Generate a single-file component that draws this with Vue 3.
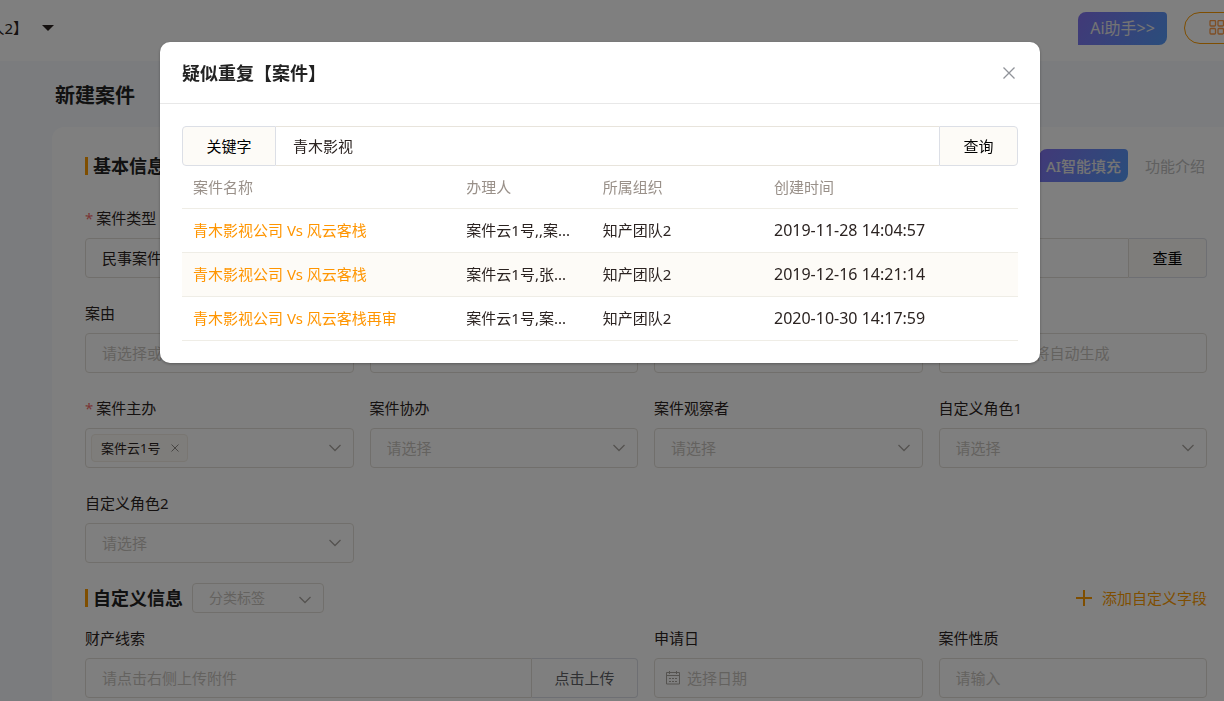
<template>
  <div class="page">
    <header class="topbar">
      <div class="account">人2】</div>
      <button class="caret" type="button" aria-label="切换账号">
        <svg width="12" height="6" viewBox="0 0 12 6"><path d="M0 0h12L6 6z" fill="currentColor" /></svg>
      </button>
      <button class="ai-btn top-ai" type="button">Ai助手&gt;&gt;</button>
      <button class="apps" type="button" aria-label="应用">
        <svg width="16" height="16" viewBox="0 0 16 16" fill="none" stroke="currentColor" stroke-width="1.3">
          <rect x="1" y="0.500" width="5.500" height="5.500" rx="1" />
          <rect x="9" y="0.500" width="5.500" height="5.500" rx="1" />
          <rect x="1" y="8.500" width="5.500" height="5.500" rx="1" />
          <rect x="9" y="8.500" width="5.500" height="5.500" rx="1" />
        </svg>
      </button>
    </header>

    <main>
      <h1>新建案件</h1>
      <div class="card">
        <div class="section-head first">
          <h2>基本信息</h2>
          <button class="ai-btn fill" type="button">AI智能填充</button>
          <a class="intro" href="#">功能介绍</a>
        </div>

        <div class="form">
          <div class="field">
            <label for="type"><i>*</i>案件类型</label>
            <div class="select">
              <select id="type" class="filled">
                <option>民事案件</option>
              </select>
              <svg class="arrow" viewBox="0 0 12 8"><path d="M0.5 1L6 6.500 11.500 1" /></svg>
            </div>
          </div>
          <div class="field span3 no-label">
            <div class="group">
              <input type="text" aria-label="案件名称" />
              <button class="append" type="button">查重</button>
            </div>
          </div>

          <div class="field">
            <label for="cause">案由</label>
            <input id="cause" type="text" placeholder="请选择或输入" />
          </div>
          <div class="field no-label"><input type="text" aria-label="案件标的" /></div>
          <div class="field no-label"><input type="text" aria-label="案件阶段" /></div>
          <div class="field no-label">
            <input type="text" aria-label="案件编号" placeholder="保存后 系统将自动生成" />
          </div>

          <div class="field">
            <label for="owner"><i>*</i>案件主办</label>
            <div class="select tags">
              <span class="tag">
                案件云1号
                <button id="owner" type="button" aria-label="移除">
                  <svg width="8" height="8" viewBox="0 0 8 8"><path d="M0.5 0.5l7 7M7.5 0.5l-7 7" /></svg>
                </button>
              </span>
              <svg class="arrow" viewBox="0 0 12 8"><path d="M0.5 1L6 6.500 11.500 1" /></svg>
            </div>
          </div>
          <div v-for="item in roles" :key="item.id" class="field">
            <label :for="item.id">{{ item.label }}</label>
            <div class="select">
              <select :id="item.id">
                <option>请选择</option>
              </select>
              <svg class="arrow" viewBox="0 0 12 8"><path d="M0.5 1L6 6.500 11.500 1" /></svg>
            </div>
          </div>
        </div>

        <div class="section-head">
          <h2>自定义信息</h2>
          <div class="select small">
            <select aria-label="分类标签">
              <option>分类标签</option>
            </select>
            <svg class="arrow" viewBox="0 0 12 8"><path d="M0.5 1L6 6.500 11.500 1" /></svg>
          </div>
          <button class="add" type="button">
            <svg width="16" height="16" viewBox="0 0 16 16"><path d="M8 0v16M0 8h16" /></svg>
            添加自定义字段
          </button>
        </div>

        <div class="form">
          <div class="field span2">
            <label for="clue">财产线索</label>
            <div class="group">
              <input id="clue" type="text" placeholder="请点击右侧上传附件" />
              <button class="append upload" type="button">点击上传</button>
            </div>
          </div>
          <div class="field">
            <label for="date">申请日</label>
            <div class="date">
              <svg width="14" height="14" viewBox="0 0 14 14">
                <path d="M0.5 1.5h13v11.500h-13zM0.500 4.500h13M3.500 0v3M10.500 0v3M3 7.500h2M6 7.500h2M9 7.500h2M3 10.500h2M6 10.500h2M9 10.500h2" />
              </svg>
              <input id="date" type="text" placeholder="选择日期" />
            </div>
          </div>
          <div class="field">
            <label for="nature">案件性质</label>
            <input id="nature" type="text" placeholder="请输入" />
          </div>
        </div>
      </div>
    </main>

    <div class="mask">
      <section class="dialog" role="dialog" aria-labelledby="dialog-title">
        <div class="dialog-head">
          <h2 id="dialog-title">疑似重复【案件】</h2>
          <button type="button" aria-label="关闭">
            <svg width="12" height="12" viewBox="0 0 12 12"><path d="M0.5 0.5l11 11M11.5 0.5l-11 11" /></svg>
          </button>
        </div>
        <div class="dialog-body">
          <div class="search">
            <label for="keyword">关键字</label>
            <input id="keyword" v-model="keyword" type="text" />
            <button type="button">查询</button>
          </div>
          <table>
            <thead>
              <tr>
                <th class="col-name">案件名称</th>
                <th class="col-person">办理人</th>
                <th class="col-org">所属组织</th>
                <th>创建时间</th>
              </tr>
            </thead>
            <tbody>
              <tr v-for="row in rows" :key="row.time">
                <td><a href="#">{{ row.name }}</a></td>
                <td>{{ row.person }}</td>
                <td>{{ row.org }}</td>
                <td class="time">{{ row.time }}</td>
              </tr>
            </tbody>
          </table>
        </div>
      </section>
    </div>
  </div>
</template>

<script setup>
import { ref } from 'vue';

const keyword = ref('青木影视');

const roles = [
  { id: 'assist', label: '案件协办' },
  { id: 'watcher', label: '案件观察者' },
  { id: 'role1', label: '自定义角色1' },
  { id: 'role2', label: '自定义角色2' },
];

const rows = [
  { name: '青木影视公司 Vs 风云客栈', person: '案件云1号,,案...', org: '知产团队2', time: '2019-11-28 14:04:57' },
  { name: '青木影视公司 Vs 风云客栈', person: '案件云1号,张...', org: '知产团队2', time: '2019-12-16 14:21:14' },
  { name: '青木影视公司 Vs 风云客栈再审', person: '案件云1号,案...', org: '知产团队2', time: '2020-10-30 14:17:59' },
];
</script>

<style>
body {
  margin: 0;
  overflow: hidden;
}
</style>

<style scoped>
* {
  box-sizing: border-box;
}

.page {
  height: 100vh;
  overflow: hidden;
  background: #f6f8fd;
  color: #2b2321;
  font-family: 'Noto Sans', 'Noto Sans CJK SC', sans-serif;
  font-size: 15px;
  line-height: 20px;
}

h1,
h2 {
  margin: 0;
  color: #222;
  font-weight: bold;
}

button,
input,
select {
  margin: 0;
  padding: 0;
  border: 0;
  background: none;
  color: inherit;
  font: inherit;
}

a {
  text-decoration: none;
}

svg {
  display: block;
  flex: none;
}

.topbar {
  display: flex;
  align-items: center;
  height: 61px;
  padding-bottom: 5px;
  background: #fff;
}

.account {
  display: flex;
  justify-content: flex-end;
  width: 28px;
  overflow: hidden;
  white-space: nowrap;
}

.caret {
  margin-left: 14px;
}

.ai-btn {
  flex: none;
  width: 89px;
  height: 33px;
  border-radius: 8px 4px 8px 0;
  background: linear-gradient(120deg, #8373f0, #559bf8);
  color: #e8e8e8;
  white-space: nowrap;
}

.top-ai {
  margin-left: auto;
  font-size: 16px;
}

.apps {
  flex: none;
  width: 100px;
  height: 32px;
  margin-left: 17px;
  margin-right: -60px;
  padding-left: 24px;
  border: 1px solid #ff9c00;
  border-radius: 16px;
  color: #ff9c48;
}

h1 {
  padding: 21px 0 17px 55px;
  font-size: 20px;
  line-height: 28px;
}

.card {
  margin-left: 52px;
  padding: 19px 17px 40px 33px;
  border-radius: 12px 0 0 0;
  background: #fff;
}

.section-head {
  display: flex;
  align-items: center;
  height: 40px;
}

.section-head.first {
  height: 39px;
  margin-bottom: 13px;
}

.section-head h2 {
  padding-left: 5px;
  border-left: 3px solid #ff9c00;
  font-size: 18px;
  line-height: 18px;
}

.fill {
  margin-left: auto;
  font-weight: 500;
}

.intro {
  width: 62px;
  margin-left: 17px;
  color: #c0c0c0;
}

.form {
  display: grid;
  grid-template-columns: repeat(4, 1fr);
  gap: 15px 16px;
  margin-bottom: 15px;
}

.field {
  min-width: 0;
}

.span2 {
  grid-column: span 2;
}

.span3 {
  grid-column: span 3;
}

.field.no-label {
  padding-top: 40px;
}

label {
  display: block;
  line-height: 40px;
}

label i {
  margin-right: 3px;
  color: #f56c6c;
  font-style: normal;
}

.field input,
.select select {
  display: block;
  width: 100%;
  height: 40px;
  padding: 0 16px;
  border: 1px solid #e3dfd8;
  border-radius: 4px;
}

input::placeholder {
  color: #c9c5bf;
  opacity: 1;
}

.select {
  position: relative;
}

.select select {
  appearance: none;
  color: #c9c5bf;
}

.select select.filled {
  color: inherit;
}

.arrow {
  position: absolute;
  top: 16px;
  right: 13px;
  width: 12px;
  height: 8px;
  fill: none;
  stroke: #aaa6a0;
  stroke-width: 1.3;
  pointer-events: none;
}

.tags {
  display: flex;
  align-items: center;
  height: 40px;
  padding-left: 5px;
  border: 1px solid #e3dfd8;
  border-radius: 4px;
}

.tags .arrow {
  top: 15px;
  right: 12px;
}

.tag {
  display: flex;
  align-items: center;
  gap: 11px;
  height: 28px;
  padding: 0 8px 0 9px;
  border: 1px solid #f2ede4;
  border-radius: 4px;
  background: #fdfbf7;
  font-size: 13px;
}

.tag svg {
  stroke: #908c88;
}

.small {
  width: 132px;
  margin-left: 9px;
}

.small select {
  height: 30px;
  font-size: 14px;
}

.small .arrow {
  top: 13px;
}

.add {
  display: flex;
  align-items: center;
  gap: 10px;
  margin-left: auto;
  color: #ff9c00;
}

.add svg {
  stroke: #ff9c00;
  stroke-width: 2;
}

.group {
  display: flex;
}

.group input {
  flex: 1;
  min-width: 0;
  border-radius: 4px 0 0 4px;
}

.append {
  flex: none;
  width: 78px;
  border: 1px solid #dcdfe6;
  border-left: 0;
  border-radius: 0 4px 4px 0;
  background: #fdfbf7;
  color: #000;
}

.upload {
  width: 106px;
  background: none;
  color: #606266;
}

.date {
  display: flex;
  align-items: center;
  gap: 7px;
  height: 40px;
  padding-left: 11px;
  border: 1px solid #e3dfd8;
  border-radius: 4px;
}

.date svg {
  fill: none;
  stroke: #aaa6a0;
}

.date input {
  flex: 1;
  min-width: 0;
  height: 38px;
  padding: 0;
  border: 0;
}

.mask {
  position: fixed;
  inset: 0;
  padding: 42px 184px 0 160px;
  background: rgba(0, 0, 0, 0.5);
}

.dialog {
  border-radius: 10px;
  background: #fff;
  box-shadow: 0 1px 3px rgba(0, 0, 0, 0.3);
}

.dialog-head {
  display: flex;
  align-items: center;
  justify-content: space-between;
  height: 62px;
  padding: 0 25px 0 22px;
  border-bottom: 1px solid #e8e8e8;
}

.dialog-head h2 {
  font-size: 18px;
  line-height: 26px;
}

.dialog-head svg {
  stroke: #909399;
  stroke-width: 1.3;
}

.dialog-body {
  padding: 22px;
}

.search {
  display: flex;
  height: 40px;
}

.search label,
.search button {
  border: 1px solid #dcdfe6;
  background: #fdfbf7;
  color: #000;
  text-align: center;
}

.search label {
  width: 94px;
  border-radius: 4px 0 0 4px;
  line-height: 38px;
}

.search input {
  flex: 1;
  min-width: 0;
  padding: 0 17px;
  border: solid #e8e4dc;
  border-width: 1px 0;
}

.search button {
  width: 79px;
  border-radius: 0 4px 4px 0;
}

table {
  width: 100%;
  border-collapse: separate;
  border-spacing: 0;
  table-layout: fixed;
}

th,
td {
  height: 44px;
  padding: 0 11px;
  border-bottom: 1px solid #efede6;
  text-align: left;
  white-space: nowrap;
}

td {
  padding-bottom: 2px;
}

th {
  height: 43px;
  color: #999089;
  font-weight: normal;
}

.col-name {
  width: 32.7%;
}

.col-person {
  width: 16.3%;
}

.col-org {
  width: 20.5%;
}

td a {
  color: #ff9500;
}

.time {
  font-size: 16px;
}

tbody tr:nth-child(2) td {
  background: #fdfbf7;
}
</style>
